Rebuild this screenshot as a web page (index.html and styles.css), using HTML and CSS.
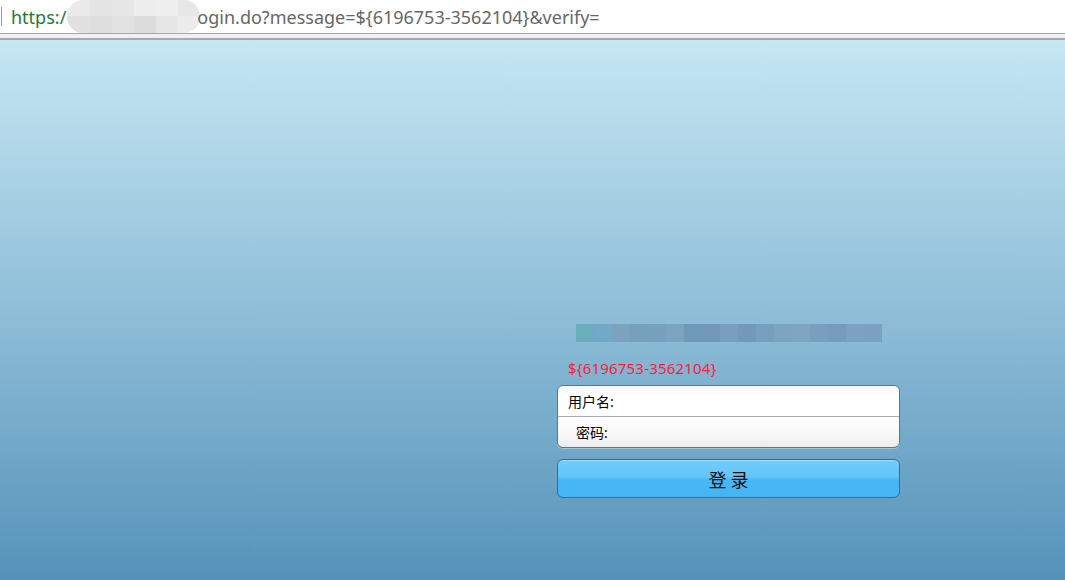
FILE: index.html
```html
<!DOCTYPE html>
<html lang="zh-CN">
<head>
<meta charset="utf-8">
<title>登录</title>
<link rel="stylesheet" href="styles.css">
</head>
<body>
<div class="addr">
  <span class="caret"></span>
  <span class="proto">https:/</span><span class="blur"><i></i><i></i><i></i><i></i><i></i><i></i></span><span class="rest">ogin.do?message=${6196753-3562104}&amp;verify=</span>
</div>
<div class="toolbar-line"></div>
<main class="page">
  <div class="login">
    <div class="title"><i style="background:#6aaebb"></i><i style="background:#72a9c9"></i><i style="background:#7ba3bf"></i><i style="background:#77a0bd"></i><i style="background:#76a1bf"></i><i style="background:#7aa4c0"></i><i style="background:#7099b8"></i><i style="background:#7298b7"></i><i style="background:#789fbd"></i><i style="background:#7399b9"></i><i style="background:#77a0be"></i><i style="background:#7ca5c2"></i><i style="background:#7ea6c0"></i><i style="background:#789fbd"></i><i style="background:#759dbb"></i><i style="background:#7ba3c1"></i><i style="background:#7aa2c0"></i></div>
    <div class="error">${6196753-3562104}</div>
    <div class="fields">
      <div class="row user"><label>用户名:</label><input type="text"></div>
      <div class="row pass"><label>密码:</label><input type="password"></div>
    </div>
    <button class="btn">登 录</button>
  </div>
</main>
</body>
</html>
```
FILE: styles.css
```css
html, body {
  margin: 0;
  padding: 0;
}
body {
  width: 1065px;
  height: 580px;
  overflow: hidden;
  font-family: "Noto Sans", "Noto Sans CJK SC", sans-serif;
  background: #fff;
}
.addr {
  height: 33px;
  display: flex;
  align-items: center;
  background: #fff;
  font-size: 18px;
  color: #666;
  white-space: nowrap;
  position: relative;
}
.caret {
  width: 1px;
  height: 19px;
  background: #999;
  margin: 0 9px 0 1px;
}
.proto {
  color: #1d7a3a;
}
.blur {
  display: inline-flex;
  width: 133px;
  height: 33px;
  margin-left: 1px;
  margin-right: -3px;
  border-radius: 18px;
  overflow: hidden;
  background: #ececec;
}
.blur i {
  flex: 1;
  background: linear-gradient(#eaeaea 50%, #e1e1e1 50%);
}
.blur i:nth-child(2) { background: linear-gradient(#e4e4e4 50%, #dedede 50%); }
.blur i:nth-child(3) { background: linear-gradient(#e6e6e6 50%, #e2e2e2 50%); }
.blur i:nth-child(4) { background: linear-gradient(#ededed 50%, #dcdcdc 50%); }
.blur i:nth-child(5) { background: linear-gradient(#eeeeee 50%, #e6e6e6 50%); }
.blur i:nth-child(6) { background: linear-gradient(#e7e7e7 50%, #ececec 50%); }
.toolbar-line {
  height: 4px;
  border-top: 1px solid #a8a8a8;
  border-bottom: 2px solid #a9a9a9;
  background: #f0f0f0;
}
.page {
  height: 540px;
  background: linear-gradient(#c6e7f3 0%, #8fbed8 50%, #5592b9 100%);
  padding-top: 284px;
  box-sizing: border-box;
}
.login {
  margin-left: 557px;
  width: 343px;
}
.title {
  display: flex;
  margin-left: 19px;
  width: 306px;
  height: 18px;
}
.title i {
  flex: 1;
}
.error {
  margin: 16px 0 0 11px;
  color: #ff1a3a;
  font-size: 15px;
  letter-spacing: 0.2px;
  line-height: 20px;
  height: 27px;
}
.fields {
  width: 341px;
  border: 1px solid #4a7ca3;
  border-radius: 6px;
  overflow: hidden;
  box-shadow: 0 1px 0 rgba(255,255,255,0.35);
}
.row {
  height: 30px;
  display: flex;
  align-items: center;
  font-size: 14px;
  color: #000;
}
.row label {
  flex: none;
}
.row input {
  flex: 1;
  border: 0;
  background: transparent;
  outline: none;
  height: 26px;
}
.user {
  background: linear-gradient(#f6f6f6, #ffffff 35%, #ffffff);
  padding-left: 10px;
  border-bottom: 1px solid #a7adb2;
}
.pass {
  background: linear-gradient(#ffffff, #f7f7f7 60%, #ececec);
  padding-left: 18px;
}
.btn {
  display: block;
  margin-top: 11px;
  width: 343px;
  height: 39px;
  border: 1px solid #2c6f98;
  border-radius: 6px;
  background: linear-gradient(#72cdfb 0%, #63c4f8 45%, #47b6f4 55%, #45b5f3 100%);
  font-family: "Noto Sans CJK SC", sans-serif;
  font-size: 18px;
  color: #111;
  padding: 0;
  box-shadow: inset 0 1px 0 rgba(255,255,255,0.3);
}
```
